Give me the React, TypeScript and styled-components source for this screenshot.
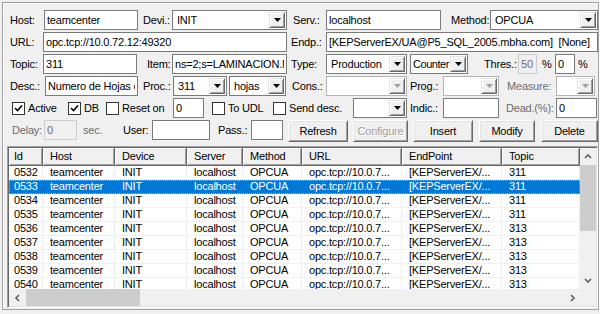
import React from 'react';
import styled, { createGlobalStyle } from 'styled-components';

const GlobalStyle = createGlobalStyle`
  html, body {
    margin: 0;
    padding: 0;
    background: #f0f0f0;
  }
  body {
    font-family: "Liberation Sans", Arial, sans-serif;
    font-size: 11px;
    letter-spacing: -0.2px;
    color: #000;
  }
  * {
    box-sizing: border-box;
  }
`;

const Frame = styled.div`
  margin: 2px 0 0 2px;
  width: 597px;
  height: 308px;
  border: 1px solid #a0a0a0;
  box-shadow: inset 1px 1px #fff, 1px 1px #fff;
  padding: 7px 0 0 4px;
  display: flex;
  flex-direction: column;
  gap: 2px;
`;

const Row = styled.div<{ $h?: number }>`
  display: flex;
  align-items: ${p => (p.$h ? 'flex-start' : 'center')};
  height: ${p => p.$h ?? 20}px;
  padding-left: 3px;
`;

const Label = styled.span<{ $w: number; $pl?: number; $off?: boolean }>`
  flex: none;
  width: ${p => p.$w}px;
  padding-left: ${p => p.$pl ?? 0}px;
  height: 20px;
  line-height: 20px;
  white-space: nowrap;
  color: ${p => (p.$off ? '#6d6d6d' : '#000')};
`;

const Edit = styled.input<{ $w: number }>`
  flex: none;
  width: ${p => p.$w}px;
  height: 20px;
  margin: 0;
  padding: 0 2px;
  border: 1px solid #7a7a7a;
  background: #fff;
  font: inherit;
  letter-spacing: inherit;
  color: #000;
  outline: none;

  &:disabled {
    border-color: #cccccc;
    background: #f0f0f0;
    color: #6d6d6d;
  }
`;

const Combo = styled.div<{ $w: number; $off?: boolean; $ml?: number }>`
  flex: none;
  width: ${p => p.$w}px;
  height: 20px;
  margin-left: ${p => p.$ml ?? 0}px;
  border: 1px solid ${p => (p.$off ? '#b4b4b4' : '#7a7a7a')};
  background: #fff;
  padding: 1px;
  display: flex;
  align-items: center;
`;

const ComboText = styled.span<{ $tight?: boolean }>`
  flex: 1;
  min-width: 0;
  padding-left: ${p => (p.$tight ? 1 : 3)}px;
  letter-spacing: ${p => (p.$tight ? -0.45 : -0.2)}px;
  overflow: hidden;
  white-space: nowrap;
`;

const ComboButton = styled.span<{ $off?: boolean }>`
  flex: none;
  width: 16px;
  height: 16px;
  color: ${p => (p.$off ? '#a0a0a0' : '#000')};
  background: #f0f0f0;
  border: 1px solid;
  border-color: #e3e3e3 #696969 #696969 #e3e3e3;
  box-shadow: inset 1px 1px #fff, inset -1px -1px #a0a0a0;
  display: flex;
  align-items: center;
  justify-content: center;
`;

const CheckItem = styled.label<{ $w: number; $ml?: number }>`
  flex: none;
  width: ${p => p.$w}px;
  margin-left: ${p => p.$ml ?? 0}px;
  display: flex;
  align-items: center;
  gap: 3px;
  white-space: nowrap;
`;

const Box = styled.span`
  flex: none;
  width: 13px;
  height: 13px;
  border: 1px solid #333;
  background: #fff;
  display: flex;
  align-items: center;
  justify-content: center;
`;

const Button = styled.button<{ $w: number; $ml: number }>`
  flex: none;
  width: ${p => p.$w}px;
  height: 22px;
  margin: 0 0 0 ${p => p.$ml}px;
  padding: 0;
  font: inherit;
  letter-spacing: inherit;
  color: #000;
  background: #f0f0f0;
  border: 1px solid;
  border-color: #fff #696969 #696969 #fff;
  box-shadow: inset 1px 1px #e3e3e3, inset -1px -1px #a0a0a0;

  &:disabled {
    color: #a0a0a0;
    text-shadow: 1px 1px #fff;
  }
`;

const ListView = styled.div`
  margin-top: 2px;
  width: 591px;
  height: 162px;
  border: 1px solid;
  border-color: #a0a0a0 #fff #fff #a0a0a0;
  box-shadow: inset 1px 1px #696969, inset -1px -1px #e3e3e3;
  padding: 1px;
  background: #fff;
  display: grid;
  grid-template-columns: 1fr 16px;
  grid-template-rows: 1fr 17px;
`;

const Body = styled.div`
  overflow: hidden;
`;

const COLS = [34, 72, 72, 56, 59, 100, 100, 78];
const colTemplate = COLS.map(c => `${c}px`).join(' ');

const HeaderRow = styled.div`
  display: grid;
  grid-template-columns: ${colTemplate};
  height: 18px;
`;

const HeaderCell = styled.div<{ $first?: boolean }>`
  background: #f0f0f0;
  border-right: 1px solid #696969;
  border-bottom: 1px solid #696969;
  box-shadow: inset 1px 1px #fff, inset -1px -1px #a0a0a0;
  padding-left: ${p => (p.$first ? 5 : 7)}px;
  line-height: 17px;
  white-space: nowrap;
  overflow: hidden;
`;

const DataRow = styled.div<{ $sel?: boolean }>`
  position: relative;
  display: grid;
  grid-template-columns: ${colTemplate};
  height: 14px;
  border-bottom: 1px solid ${p => (p.$sel ? '#0078d7' : '#f0f0f0')};
  background: ${p => (p.$sel ? '#0078d7' : '#fff')};
  color: ${p => (p.$sel ? '#fff' : '#000')};

  &::after {
    content: '';
    display: ${p => (p.$sel ? 'block' : 'none')};
    position: absolute;
    inset: 0 0 -1px 0;
    border: 1px dotted #ff9a3c;
    pointer-events: none;
  }
`;

const Cell = styled.div<{ $first?: boolean; $sel?: boolean }>`
  padding-left: ${p => (p.$first ? 5 : 7)}px;
  border-right: 1px solid ${p => (p.$sel ? '#0078d7' : '#f0f0f0')};
  line-height: 13px;
  white-space: nowrap;
  overflow: hidden;
`;

const VScroll = styled.div`
  background: #f0f0f0;
  display: flex;
  flex-direction: column;
`;

const HScroll = styled.div`
  background: #f0f0f0;
  display: flex;
`;

const Corner = styled.div`
  background: #f0f0f0;
`;

const ArrowBox = styled.div<{ $v?: boolean }>`
  flex: none;
  width: ${p => (p.$v ? 16 : 17)}px;
  height: 17px;
  display: flex;
  align-items: center;
  justify-content: center;
`;

const Thumb = styled.div<{ $v?: boolean; $size: number }>`
  flex: none;
  background: #cdcdcd;
  ${p => (p.$v ? `height: ${p.$size}px;` : `width: ${p.$size}px;`)}
`;

const Track = styled.div`
  flex: 1;
`;

const Arrow = () => (
  <svg width="7" height="4" viewBox="0 0 7 4">
    <polygon points="0,0 7,0 3.5,4" fill="currentColor" />
  </svg>
);

const DropDown = ({ w, text, off, ml, tight }: { w: number; text?: string; off?: boolean; ml?: number; tight?: boolean }) => (
  <Combo $w={w} $off={off} $ml={ml}>
    <ComboText $tight={tight}>{text}</ComboText>
    <ComboButton $off={off}>
      <Arrow />
    </ComboButton>
  </Combo>
);

const Check = ({ label, checked, w, ml }: { label: string; checked?: boolean; w: number; ml?: number }) => (
  <CheckItem $w={w} $ml={ml}>
    <Box>
      {checked && (
        <svg width="9" height="9" viewBox="0 0 9 9">
          <polyline points="1,4 3.5,6.5 8,1.5" fill="none" stroke="#000" strokeWidth="1.6" />
        </svg>
      )}
    </Box>
    {label}
  </CheckItem>
);

const Chevron = ({ dir }: { dir: 'up' | 'down' | 'left' | 'right' }) => {
  const pts = {
    up: '1,5 4,2 7,5',
    down: '1,2 4,5 7,2',
    left: '5,1 2,4 5,7',
    right: '3,1 6,4 3,7',
  }[dir];
  return (
    <svg width="8" height="8" viewBox="0 0 8 8">
      <polyline points={pts} fill="none" stroke="#606060" strokeWidth="1.6" />
    </svg>
  );
};

const rows = [
  ['0532', '311'],
  ['0533', '311'],
  ['0534', '311'],
  ['0535', '311'],
  ['0536', '313'],
  ['0537', '313'],
  ['0538', '313'],
  ['0539', '313'],
  ['0540', '313'],
];

const headers = ['Id', 'Host', 'Device', 'Server', 'Method', 'URL', 'EndPoint', 'Topic'];

export default function App() {
  return (
    <>
      <GlobalStyle />
      <Frame>
        <Row>
          <Label $w={34}>Host:</Label>
          <Edit $w={94} readOnly defaultValue="teamcenter" />
          <Label $w={34} $pl={5}>Devi.:</Label>
          <DropDown w={115} text="INIT" />
          <Label $w={39} $pl={6}>Serv.:</Label>
          <Edit $w={115} readOnly defaultValue="localhost" />
          <Label $w={49} $pl={10}>Method:</Label>
          <DropDown w={108} text="OPCUA" />
        </Row>
        <Row>
          <Label $w={33}>URL:</Label>
          <Edit $w={244} readOnly defaultValue="opc.tcp://10.0.72.12:49320" />
          <Label $w={39} $pl={4}>Endp.:</Label>
          <Edit $w={272} readOnly defaultValue="[KEPServerEX/UA@P5_SQL_2005.mbha.com]  [None]" />
        </Row>
        <Row>
          <Label $w={33}>Topic:</Label>
          <Edit $w={94} readOnly defaultValue="311" />
          <Label $w={35} $pl={10}>Item:</Label>
          <Edit $w={115} readOnly defaultValue="ns=2;s=LAMINACION.MAQ1.Hojas" />
          <Label $w={39} $pl={4}>Type:</Label>
          <DropDown w={81} text="Production" />
          <DropDown w={58} text="Counter" ml={3} tight />
          <Label $w={50} $pl={16}>Thres.:</Label>
          <Edit $w={19} disabled defaultValue="50" />
          <Label $w={18} $pl={5}>%</Label>
          <Edit $w={20} readOnly defaultValue="0" />
          <Label $w={20} $pl={3}>%</Label>
        </Row>
        <Row>
          <Label $w={35}>Desc.:</Label>
          <Edit $w={93} readOnly defaultValue="Numero de Hojas contadas" />
          <Label $w={35} $pl={5}>Proc.:</Label>
          <DropDown w={54} text="311" />
          <DropDown w={57} text="hojas" ml={2} />
          <Label $w={40} $pl={6}>Cons.:</Label>
          <DropDown w={81} off />
          <Label $w={36} $pl={3}>Prog.:</Label>
          <DropDown w={56} off />
          <Label $w={57} $pl={8} $off>Measure:</Label>
          <DropDown w={39} off />
        </Row>
        <Row>
          <Check label="Active" checked w={56} ml={2} />
          <Check label="DB" checked w={38} />
          <Check label="Reset on" w={67} />
          <Edit $w={31} readOnly defaultValue="0" />
          <Check label="To UDL" w={61} ml={8} />
          <Check label="Send desc." w={80} />
          <DropDown w={54} />
          <Label $w={36} $pl={3}>Indic.:</Label>
          <Edit $w={56} readOnly defaultValue="" />
          <Label $w={57} $pl={7} $off>Dead.(%):</Label>
          <Edit $w={41} readOnly defaultValue="0" />
        </Row>
        <Row $h={22}>
          <Label $w={34} $pl={2} $off>Delay:</Label>
          <Edit $w={33} disabled defaultValue="0" />
          <Label $w={46} $pl={6} $off>sec.</Label>
          <Label $w={29}>User:</Label>
          <Edit $w={58} readOnly defaultValue="" />
          <Label $w={41} $pl={8}>Pass.:</Label>
          <Edit $w={32} readOnly defaultValue="" />
          <Button $w={60} $ml={5}>Refresh</Button>
          <Button $w={55} $ml={5} disabled>Configure</Button>
          <Button $w={60} $ml={5}>Insert</Button>
          <Button $w={56} $ml={6}>Modify</Button>
          <Button $w={57} $ml={6}>Delete</Button>
        </Row>
        <ListView>
          <Body>
            <HeaderRow>
              {headers.map((h, i) => (
                <HeaderCell key={h} $first={i === 0}>{h}</HeaderCell>
              ))}
            </HeaderRow>
            {rows.map(([id, topic]) => {
              const sel = id === '0533';
              const cells = [id, 'teamcenter', 'INIT', 'localhost', 'OPCUA', 'opc.tcp://10.0.7...', '[KEPServerEX/...', topic];
              return (
                <DataRow key={id} $sel={sel}>
                  {cells.map((c, i) => (
                    <Cell key={i} $first={i === 0} $sel={sel}>{c}</Cell>
                  ))}
                </DataRow>
              );
            })}
          </Body>
          <VScroll>
            <ArrowBox $v><Chevron dir="up" /></ArrowBox>
            <Thumb $v $size={66} />
            <Track />
            <ArrowBox $v><Chevron dir="down" /></ArrowBox>
          </VScroll>
          <HScroll>
            <ArrowBox><Chevron dir="left" /></ArrowBox>
            <Thumb $size={114} />
            <Track />
            <ArrowBox><Chevron dir="right" /></ArrowBox>
          </HScroll>
          <Corner />
        </ListView>
      </Frame>
    </>
  );
}
